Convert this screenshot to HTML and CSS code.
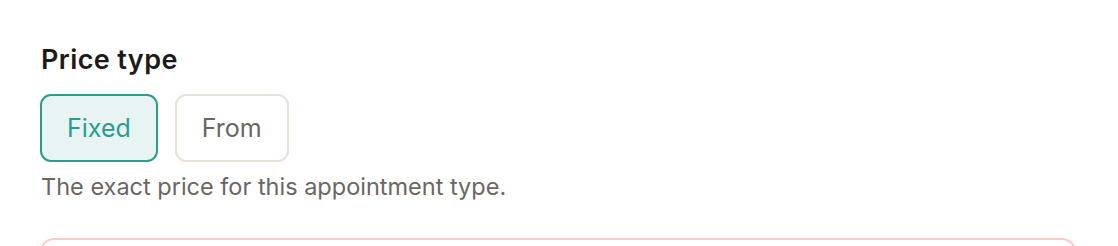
FILE: index.html
```html
<!DOCTYPE html>
<html lang="en">
<head>
    <meta charset="UTF-8">
    <title>Price type</title>
    <link rel="stylesheet" href="styles.css">
</head>
<body>
<div class="field">
  <div class="label">Price type</div>
  <div class="options">
    <button class="option selected">Fixed</button>
    <button class="option">From</button>
  </div>
  <div class="hint">The exact price for this appointment type.</div>
  <div class="next-box"></div>
</div>
</body>
</html>
```
FILE: styles.css
```css
  body {
    margin: 0;
    background-color: #ffffff;
    font-family: Inter, "Noto Sans", sans-serif;
  }

  .field {
    padding: 44px 0 0 40px;
    width: 1036px;
  }

  .label {
    font-size: 27px;
    font-weight: 600;
    letter-spacing: 0.4px;
    color: #1c1b1a;
    line-height: 32px;
    padding-left: 1px;
  }

  .options {
    display: flex;
    gap: 17px;
    margin-top: 18px;
  }

  .option {
    height: 68px;
    padding: 0 25px;
    border: 2px solid #e8e2d7;
    border-radius: 11px;
    background-color: #ffffff;
    color: #6b6661;
    font-family: Inter, "Noto Sans", sans-serif;
    font-size: 25px;
  }

  .option.selected {
    border-color: #2a9d8f;
    background-color: #e7f4f3;
    color: #2a9d8f;
  }

  .hint {
    margin-top: 11px;
    padding-left: 1px;
    font-size: 23.5px;
    line-height: 28px;
    color: #6b6661;
  }

  .next-box {
    margin-top: 37px;
    height: 40px;
    border: 2px solid #ffcbc1;
    border-radius: 14px;
  }
```
